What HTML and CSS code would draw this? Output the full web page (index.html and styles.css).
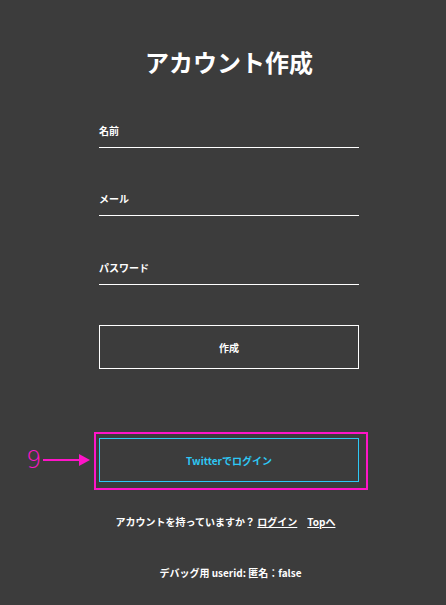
FILE: index.html
```html
<!DOCTYPE html>
<html lang="ja">
<head>
<meta charset="utf-8">
<link rel="stylesheet" href="styles.css">
</head>
<body>
<main class="page">
  <h1 class="title">アカウント作成</h1>
  <form class="form">
    <div class="field">
      <label class="label">名前</label>
      <div class="input"></div>
    </div>
    <div class="field">
      <label class="label">メール</label>
      <div class="input"></div>
    </div>
    <div class="field">
      <label class="label">パスワード</label>
      <div class="input"></div>
    </div>
    <div class="btn create">作成</div>
    <div class="twitter-wrap">
      <div class="btn twitter">Twitterでログイン</div>
      <div class="mark"></div>
      <div class="callout">
        <span class="num">9</span>
        <svg class="arrow" width="48" height="14" viewBox="0 0 48 14">
          <line x1="0" y1="7" x2="38" y2="7" stroke="#ff14c8" stroke-width="2"/>
          <polygon points="36,1 47,7 36,13" fill="#ff14c8"/>
        </svg>
      </div>
    </div>
  </form>
  <p class="footer">アカウントを持っていますか？ <a class="link">ログイン</a><a class="link top">Topへ</a></p>
  <p class="debug">デバッグ用 userid: 匿名：false</p>
</main>
</body>
</html>
```
FILE: styles.css
```css
html, body {
  margin: 0;
  padding: 0;
  background: #3c3c3c;
  height: 100%;
}
body {
  font-family: "Noto Sans CJK JP", "Noto Sans", sans-serif;
  color: #ffffff;
}
.page {
  width: 260px;
  margin-left: 99px;
  padding-top: 45px;
}
.title {
  margin: 0;
  font-size: 24px;
  line-height: 34px;
  font-weight: 700;
  text-align: center;
}
.form {
  margin-top: 45px;
  display: flex;
  flex-direction: column;
}
.field {
  display: flex;
  flex-direction: column;
  margin-bottom: 44px;
}
.field:nth-child(2) {
  margin-bottom: 45px;
}
.field:nth-child(3) {
  margin-bottom: 40px;
}
.label {
  font-size: 10px;
  line-height: 14px;
  font-weight: 700;
}
.input {
  height: 9px;
  border-bottom: 1px solid #ffffff;
}
.btn {
  box-sizing: border-box;
  height: 44px;
  display: flex;
  align-items: center;
  justify-content: center;
  font-size: 10px;
  font-weight: 700;
}
.create {
  border: 1px solid #ffffff;
}
.twitter-wrap {
  position: relative;
  margin-top: 69px;
}
.twitter {
  border: 1px solid #2ec8f5;
  color: #2ec8f5;
}
.mark {
  position: absolute;
  left: -5px;
  top: -6px;
  right: -9px;
  bottom: -8px;
  border: 2px solid #ff14c8;
}
.callout {
  position: absolute;
  left: -73px;
  top: 10px;
  display: flex;
  align-items: center;
  gap: 2px;
}
.num {
  color: #ff14c8;
  font-family: "DejaVu Sans", sans-serif;
  font-size: 24px;
  line-height: 24px;
  font-weight: 300;
}
.arrow {
  display: block;
}
.footer {
  margin: 33px 7px 0 0;
  font-size: 10px;
  line-height: 14px;
  font-weight: 700;
  text-align: center;
}
.link {
  color: #ffffff;
  text-decoration: underline;
}
.top {
  margin-left: 10px;
}
.debug {
  margin: 37px 0 0 3px;
  font-size: 10px;
  line-height: 14px;
  font-weight: 700;
  text-align: center;
}
```
